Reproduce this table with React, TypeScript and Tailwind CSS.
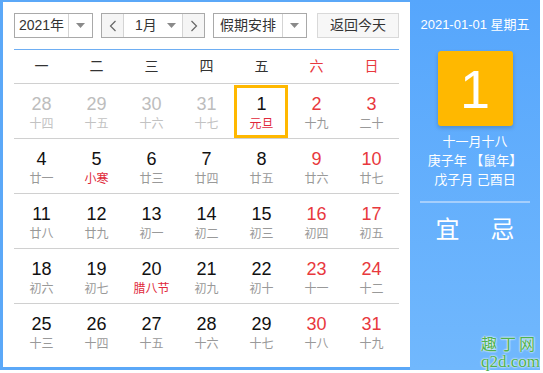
import React from 'react';

type Day = {
  n: number;
  lunar: string;
  muted?: boolean;
  weekend?: boolean;
  festival?: boolean;
  today?: boolean;
};

const weekdays = ['一', '二', '三', '四', '五', '六', '日'];

const rows: Day[][] = [
  [
    { n: 28, lunar: '十四', muted: true },
    { n: 29, lunar: '十五', muted: true },
    { n: 30, lunar: '十六', muted: true },
    { n: 31, lunar: '十七', muted: true },
    { n: 1, lunar: '元旦', festival: true, today: true },
    { n: 2, lunar: '十九', weekend: true },
    { n: 3, lunar: '二十', weekend: true },
  ],
  [
    { n: 4, lunar: '廿一' },
    { n: 5, lunar: '小寒', festival: true },
    { n: 6, lunar: '廿三' },
    { n: 7, lunar: '廿四' },
    { n: 8, lunar: '廿五' },
    { n: 9, lunar: '廿六', weekend: true },
    { n: 10, lunar: '廿七', weekend: true },
  ],
  [
    { n: 11, lunar: '廿八' },
    { n: 12, lunar: '廿九' },
    { n: 13, lunar: '初一' },
    { n: 14, lunar: '初二' },
    { n: 15, lunar: '初三' },
    { n: 16, lunar: '初四', weekend: true },
    { n: 17, lunar: '初五', weekend: true },
  ],
  [
    { n: 18, lunar: '初六' },
    { n: 19, lunar: '初七' },
    { n: 20, lunar: '腊八节', festival: true },
    { n: 21, lunar: '初九' },
    { n: 22, lunar: '初十' },
    { n: 23, lunar: '十一', weekend: true },
    { n: 24, lunar: '十二', weekend: true },
  ],
  [
    { n: 25, lunar: '十三' },
    { n: 26, lunar: '十四' },
    { n: 27, lunar: '十五' },
    { n: 28, lunar: '十六' },
    { n: 29, lunar: '十七' },
    { n: 30, lunar: '十八', weekend: true },
    { n: 31, lunar: '十九', weekend: true },
  ],
];

const Caret = () => (
  <svg width="9" height="5" viewBox="0 0 9 5">
    <path d="M0 0h9L4.5 5z" fill="#8a8a8a" />
  </svg>
);

const Chevron = ({ dir }: { dir: 'left' | 'right' }) => (
  <svg width="8" height="12" viewBox="0 0 8 12">
    <path
      d={dir === 'left' ? 'M6.5 1L1.5 6l5 5' : 'M1.5 1l5 5-5 5'}
      fill="none"
      stroke="#666"
      strokeWidth="1.2"
    />
  </svg>
);

export default function App() {
  return (
    <div
      className="w-[543px] h-[373px] bg-white text-[#333]"
      style={{ fontFamily: '"Liberation Sans", "Noto Sans CJK SC", sans-serif' }}
    >
      <div className="flex h-[370px] w-[540px]">
        {/* calendar */}
        <div className="w-[410px] shrink-0 border-l-[3px] border-t-2 border-b-[3px] border-[#5ba8f8] pl-[11px] pt-[11px]">
          <div className="flex h-[25px] items-stretch text-[14px]">
            <div className="flex w-[79px] border border-[#a9a9a9]">
              <div className="flex flex-1 items-center justify-center">2021年</div>
              <div className="flex w-[24px] items-center justify-center border-l border-[#d4d4d4]">
                <Caret />
              </div>
            </div>
            <div className="ml-[8px] flex w-[104px] border border-[#a9a9a9]">
              <div className="flex w-[22px] items-center justify-center bg-[#f5f5f5] border-r border-[#d4d4d4]">
                <Chevron dir="left" />
              </div>
              <div className="flex flex-1 items-center pl-[11px] pr-[6px]">
                <span>1月</span>
                <span className="ml-auto flex">
                  <Caret />
                </span>
              </div>
              <div className="flex w-[22px] items-center justify-center bg-[#f5f5f5] border-l border-[#d4d4d4]">
                <Chevron dir="right" />
              </div>
            </div>
            <div className="ml-[8px] flex w-[94px] border border-[#a9a9a9]">
              <div className="flex flex-1 items-center justify-center">假期安排</div>
              <div className="flex w-[24px] items-center justify-center border-l border-[#d4d4d4]">
                <Caret />
              </div>
            </div>
            <div className="ml-[10px] flex w-[82px] items-center justify-center border border-[#d9d9d9] bg-[#f7f7f7]">
              返回今天
            </div>
          </div>

          <div className="mt-[11px] h-px w-[385px] bg-[#6eaef3]" />

          <div className="grid h-[33px] w-[385px] grid-cols-7 items-center text-center text-[14px]">
            {weekdays.map((w, i) => (
              <div key={w} className={i >= 5 ? 'text-[#e8383d]' : 'text-[#333]'}>
                {w}
              </div>
            ))}
          </div>

          {rows.map((row, ri) => (
            <div key={ri} className="grid h-[55px] w-[385px] grid-cols-7 border-t border-[#d0d0d0]">
              {row.map((d, ci) => {
                const numColor = d.muted ? 'text-[#bdbdbd]' : d.weekend ? 'text-[#e8383d]' : 'text-[#111]';
                const lunarColor = d.festival ? 'text-[#e0283a]' : d.muted ? 'text-[#c2c2c2]' : 'text-[#999]';
                return (
                  <div key={ci} className="relative flex flex-col items-center pt-[10px]">
                    {d.today && (
                      <div className="absolute left-0 top-px h-[53px] w-[54px] border-[3px] border-[#ffb800]" />
                    )}
                    <div className={`h-[20px] text-[18px] leading-[20px] ${numColor}`}>{d.n}</div>
                    <div className={`mt-[2px] h-[16px] text-[12px] leading-[16px] ${lunarColor}`}>{d.lunar}</div>
                  </div>
                );
              })}
            </div>
          ))}
        </div>

        {/* side panel */}
        <div className="relative flex w-[130px] flex-col items-center bg-linear-to-b from-[#56a6fc] to-[#71b8fd] text-white">
          <div className="mt-[16px] h-[18px] text-[13px] leading-[18px]">2021-01-01 星期五</div>
          <div className="mt-[17px] flex h-[75px] w-[75px] items-center justify-center rounded-[3px] bg-[#ffb800] shadow-[0_2px_4px_rgba(0,0,0,0.18)]">
            <span className="text-[54px] leading-none">1</span>
          </div>
          <div className="mt-[6px] text-[13px] leading-[19px]">十一月十八</div>
          <div className="text-[13px] leading-[19px]">庚子年 【鼠年】</div>
          <div className="text-[13px] leading-[19px]">戊子月 己酉日</div>
          <div className="mt-[12px] h-[2px] w-[110px] bg-[#a6cffc]" />
          <div className="mt-[13px] flex gap-[31px] text-[24px] leading-[28px]">
            <span>宜</span>
            <span>忌</span>
          </div>

          <div
            className="absolute bottom-0 right-0 flex flex-col items-end text-[#4fb24f]"
            style={{
              fontFamily: '"Liberation Serif", "Noto Sans CJK SC", serif',
              textShadow: '0 0 2px #fff, 0 0 2px #fff',
            }}
          >
            <span className="pr-[2px] text-[16px] leading-[19px] tracking-[3px]">趣丁网</span>
            <span className="text-[17px] leading-[16px]">q2d.com</span>
          </div>
        </div>
      </div>
    </div>
  );
}
